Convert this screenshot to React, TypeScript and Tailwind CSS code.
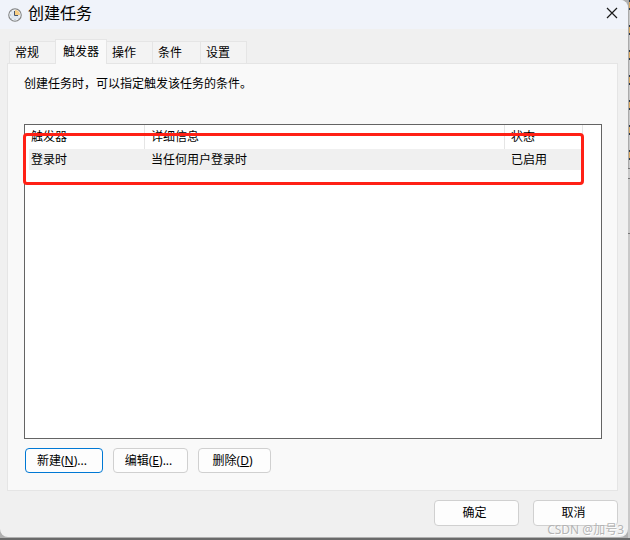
const TABS = [
  { id: 'general', label: '常规', width: 'w-[47px]' },
  { id: 'triggers', label: '触发器', width: 'w-[52px]' },
  { id: 'actions', label: '操作', width: 'w-[47px]' },
  { id: 'conditions', label: '条件', width: 'w-[49px]' },
  { id: 'settings', label: '设置', width: 'w-[47px]' },
];

const ACTIONS = [
  { label: '新建', hotkey: 'N', more: '...', look: 'w-[78px] border-[#0078d4]' },
  { label: '编辑', hotkey: 'E', more: '...', look: 'w-[75px] border-[#d0d0d0]' },
  { label: '删除', hotkey: 'D', more: '', look: 'w-[73px] border-[#d0d0d0]' },
];

const ACTIVE_TAB = 'triggers';

// left edges of the lines of text in the window behind
const BACKDROP_LINES = ['a', 'b', 'c', 'd', 'e', 'f', 'g'];

function ClockIcon() {
  return (
    <svg className="size-[14px]" viewBox="0 0 14 14" fill="none" aria-hidden="true">
      <circle cx="7" cy="7" r="6.2" fill="#dfe8f1" stroke="#858585" strokeWidth="1.2" />
      <circle cx="7" cy="7" r="5" stroke="#f4f6f8" strokeWidth=".8" />
      <path d="M7 7V2A5 5 0 0 1 12 7Z" fill="#f5cd84" />
      <path d="M6.5 3V7.5H10" stroke="#46566b" strokeWidth="1" />
      <path d="M7 11v1M2 7h1M3.5 10.5l.6-.6M10.5 10.5l-.6-.6M3.5 3.5l.6.6" stroke="#9aa7b5" strokeWidth=".8" />
    </svg>
  );
}

function TitleBar() {
  return (
    <header className="flex h-[29px] items-center rounded-tr-lg bg-[#f0f3fa] pl-2 pr-[10px]">
      <ClockIcon />
      <h1 className="-mt-1 ml-[6px] text-[16px] leading-6">创建任务</h1>
      <button type="button" aria-label="关闭" className="-mt-[3px] ml-auto">
        <svg className="size-3" viewBox="0 0 12 12" fill="none" stroke="#1a1a1a" strokeWidth="1.2">
          <path d="M1 1L11 11M11 1L1 11" />
        </svg>
      </button>
    </header>
  );
}

function TabStrip() {
  return (
    <div role="tablist" className="relative z-10 -mb-px flex items-end pl-[2px]">
      {TABS.map((tab) => {
        const active = tab.id === ACTIVE_TAB;
        return (
          <button
            key={tab.id}
            type="button"
            role="tab"
            aria-selected={active}
            className={`${tab.width} -mr-px border border-[#e5e5e5] text-left leading-4 ${
              active ? 'relative z-10 h-[25px] border-b-0 bg-[#f9f9f9] pb-px pl-[7px]' : 'h-[23px] bg-[#f3f3f3] pl-[5px]'
            }`}
          >
            {tab.label}
          </button>
        );
      })}
    </div>
  );
}

function TriggerTable() {
  return (
    <div className="relative h-[315px] border border-[#646464] bg-white">
      <table className="w-full table-fixed border-separate border-spacing-0 text-left leading-4">
        <colgroup>
          <col className="w-1" />
          <col className="w-[116px]" />
          <col />
          <col className="w-[78px]" />
          <col className="w-[18px]" />
        </colgroup>
        <thead>
          <tr className="h-6">
            <td />
            <th className="border-r border-[#e5e5e5] pl-[2px] font-normal">触发器</th>
            <th className="border-r border-[#e5e5e5] pl-[6px] font-normal">详细信息</th>
            <th className="border-r border-[#e5e5e5] pl-[6px] font-normal">状态</th>
            <td />
          </tr>
        </thead>
        <tbody>
          <tr className="h-[21px]">
            <td />
            <td className="bg-[#f0f0f0] pl-[2px]">登录时</td>
            <td className="bg-[#f0f0f0] pl-[6px]">当任何用户登录时</td>
            <td className="bg-[#f0f0f0] pl-[6px]">已启用</td>
            <td />
          </tr>
        </tbody>
      </table>
      <div className="pointer-events-none absolute -left-[2px] right-[17px] top-2 h-[52px] rounded-[4px] border-3 border-[#ff2015]" />
    </div>
  );
}

export default function App() {
  return (
    <div className="relative flex min-h-screen border-b-2 border-[#6a6a6a] bg-[#b0b0b0] font-['Noto_Sans','Noto_Sans_CJK_SC',sans-serif] text-[12px] text-black">
      <main className="mb-px flex min-w-0 flex-1 flex-col rounded-b-lg rounded-tr-lg bg-[#f0f0f0]">
        <TitleBar />
        <div className="pl-[7px] pr-[10px] pt-[10px]">
          <TabStrip />
          <section className="border border-[#e5e5e5] bg-[#f9f9f9] pb-[17px] pl-4 pr-[15px] pt-3">
            <p className="mb-8 leading-4">创建任务时，可以指定触发该任务的条件。</p>
            <TriggerTable />
            <div className="mt-[9px] flex gap-[10px] px-px">
              {ACTIONS.map((action) => (
                <button
                  key={action.hotkey}
                  type="button"
                  className={`${action.look} h-[25px] rounded-[4px] border bg-[#fdfdfd] pr-1 leading-4`}
                >
                  {action.label}(<u>{action.hotkey}</u>){action.more}
                </button>
              ))}
            </div>
          </section>
        </div>
        <footer className="flex justify-end gap-[14px] pr-[10px] pt-[9px]">
          <button
            type="button"
            className="h-[26px] w-[85px] rounded-[4px] border border-[#d0d0d0] bg-[#fdfdfd] pr-1 leading-4"
          >
            确定
          </button>
          <button
            type="button"
            className="h-[26px] w-[85px] rounded-[4px] border border-[#d0d0d0] bg-[#fdfdfd] pr-1 leading-4"
          >
            取消
          </button>
        </footer>
      </main>
      <aside className="flex w-[2px] flex-col bg-[#c9c9c9]" aria-hidden="true">
        <div className="flex flex-col gap-[15px] border-l border-[#aaaaaa] pb-2">
          {BACKDROP_LINES.map((line) => (
            <i key={line} className="h-[10px] border-y-2 border-[#303a48] bg-[#d9a860]" />
          ))}
        </div>
        <div className="h-[10px] border-t border-[#777777]" />
        <div className="h-[56px] border-y border-[#777777]" />
      </aside>
      <span className="pointer-events-none absolute bottom-0 right-[6px] leading-4 text-[#b4b4b4] [text-shadow:1px_1px_0_#ffffff]">
        CSDN @加号3
      </span>
    </div>
  );
}
